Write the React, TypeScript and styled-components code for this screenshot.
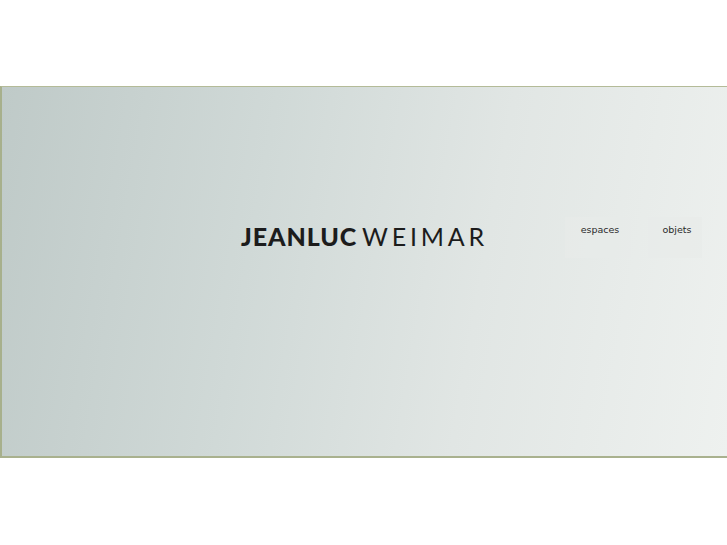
import React from 'react'
import styled, { createGlobalStyle } from 'styled-components'

const GlobalStyle = createGlobalStyle`
  html, body {
    margin: 0;
    padding: 0;
    background: #ffffff;
    font-family: 'Lato', 'DejaVu Sans', sans-serif;
  }
`

const Page = styled.div`
  width: 727px;
  height: 545px;
  padding-top: 86px;
  box-sizing: border-box;
`

const Stage = styled.main`
  height: 372px;
  box-sizing: border-box;
  border-top: 1px solid #b4bb98;
  border-left: 2px solid #a7b08c;
  border-bottom: 2px solid #a9b18e;
  background: linear-gradient(100deg, #bfcac8 0%, #d0d9d7 35%, #e1e6e4 65%, #eef1ef 100%);
  display: flex;
  align-items: flex-start;
  padding: 130px 0 0 239px;
`

const Logo = styled.h1`
  margin: 4px 0 0;
  width: 324px;
  display: flex;
  align-items: baseline;
  font-size: 25px;
  line-height: 30px;
  color: #1c1c1c;
  white-space: nowrap;
`

const Bold = styled.span`
  font-family: 'Lato', sans-serif;
  font-weight: 900;
  letter-spacing: 0.9px;
`

const Light = styled.span`
  font-family: 'Lato', sans-serif;
  font-weight: 400;
  letter-spacing: 3.8px;
  margin-left: 5px;
`

const Nav = styled.nav`
  display: flex;
  gap: 17px;
`

const NavItem = styled.a<{ $w: number }>`
  width: ${p => p.$w}px;
  height: 41px;
  box-sizing: border-box;
  padding: 7px 0 0 4px;
  text-align: center;
  background: rgba(232, 235, 234, 0.6);
  font-family: 'DejaVu Sans', sans-serif;
  font-size: 9.5px;
  color: #2a2a2a;
  text-decoration: none;
  cursor: pointer;
`

export default function App () {
  return (
    <>
      <GlobalStyle />
      <Page>
        <Stage>
          <Logo>
            <Bold>JEANLUC</Bold>
            <Light>WEIMAR</Light>
          </Logo>
          <Nav>
            <NavItem $w={66}>espaces</NavItem>
            <NavItem $w={54}>objets</NavItem>
          </Nav>
        </Stage>
      </Page>
    </>
  )
}
